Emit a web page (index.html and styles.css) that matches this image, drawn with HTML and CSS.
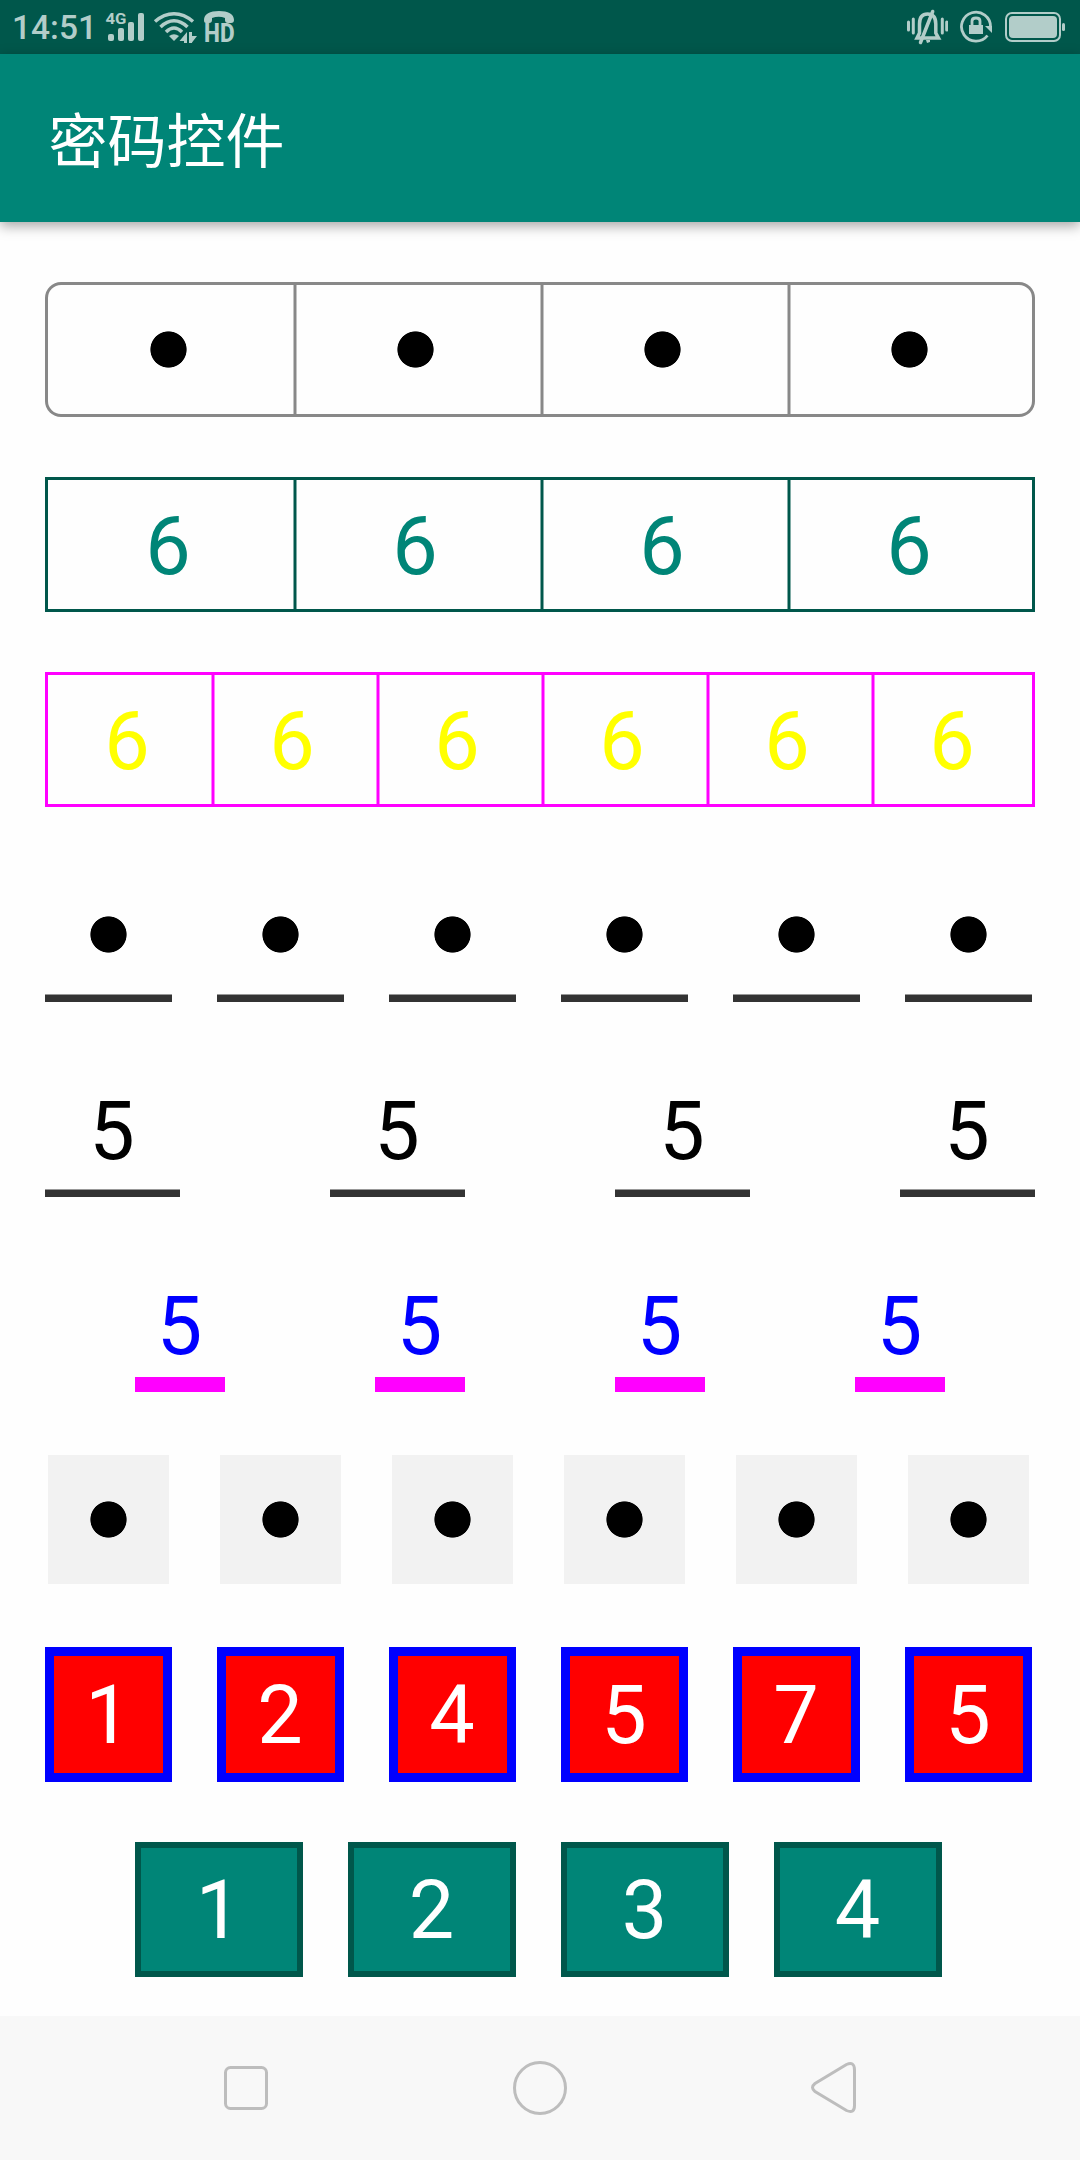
FILE: index.html
```html
<!DOCTYPE html>
<html lang="zh-CN">
<head>
<meta charset="utf-8">
<title>密码控件</title>
<link rel="stylesheet" href="styles.css">
</head>
<body>
<div class="screen">
  <div class="status-bar">
    <span class="clock">14:51</span>
    <svg class="signal" width="40" height="54" viewBox="105 0 40 54">
      <text class="network" x="105.5" y="24" textLength="21" lengthAdjust="spacingAndGlyphs">4G</text>
      <rect x="108" y="34" width="6" height="7" rx="2"/>
      <rect x="118" y="28" width="6" height="13" rx="2"/>
      <rect x="128" y="22" width="6" height="19" rx="2"/>
      <rect x="138" y="13" width="6" height="28" rx="2"/>
    </svg>
    <svg class="wifi" width="44" height="54" viewBox="153 0 44 54">
      <path class="line" d="M155 21.5Q164 13.7 174 13.7T193 21.5"/>
      <path class="line" d="M160.500 27Q167 20.800 174 20.800T187.500 27"/>
      <path class="line" d="M166 32Q170 28 174 28T182 32"/>
      <path d="M169 36Q174 32.500 179 36L174 41Z"/>
      <path d="M187 32V43H184V41H179.500Z"/>
      <path d="M189 32H192V36H197L192 42.500V43H189Z"/>
    </svg>
    <svg class="volte" width="40" height="54" viewBox="200 0 40 54">
      <path d="M204 20C204 14 210 11 219 11S234 14 234 20C234 22 233 23 231 23H228C226 23 225 22 225 20V18Q219 15.500 212 18V20C212 22 211 23 209 23H206C204.500 23 204 22 204 20Z"/>
      <text class="hd" x="204" y="42" textLength="30.500" lengthAdjust="spacingAndGlyphs">HD</text>
    </svg>
    <span class="spacer"></span>
    <svg class="bell" width="42" height="54" viewBox="906 0 42 54">
      <path class="line thin" d="M908.500 22V30M913.300 19V33M942.300 19V33M946.700 22V30"/>
      <path class="bell-shape" d="M917 38H938.500L935.800 33V24C935.800 17 932.500 14 927.500 14S919.500 17 919.500 24V33Z"/>
      <path class="line thick" d="M932.700 11.500L920.500 42.500"/>
      <path d="M926 40H930V42L927 43Z"/>
    </svg>
    <svg class="rotation" width="34" height="54" viewBox="959 0 34 54">
      <path class="line ring" d="M987.500 35.500A14.500 14.500 0 1 1 990.500 27"/>
      <path d="M985 26H992V33Z"/>
      <rect x="969" y="25" width="14" height="9"/>
      <path class="line ring" d="M972 25V21Q972 18 976 18T980 21V25"/>
    </svg>
    <svg class="battery" width="62" height="54" viewBox="1004 0 62 54">
      <rect class="shell" x="1006" y="13" width="54" height="28" rx="6"/>
      <rect x="1009" y="16" width="48" height="22" rx="4"/>
      <rect x="1062" y="23" width="3" height="8" rx="1.500"/>
    </svg>
  </div>

  <div class="app-bar"><h1 class="title">密码控件</h1></div>

  <div class="content">
    <div class="row boxed rounded">
      <div class="cell"><i class="dot"></i></div><div class="cell"><i class="dot"></i></div><div class="cell"><i class="dot"></i></div><div class="cell"><i class="dot"></i></div>
    </div>
    <div class="row digits boxed teal">
      <div class="cell">6</div><div class="cell">6</div><div class="cell">6</div><div class="cell">6</div>
    </div>
    <div class="row digits boxed six">
      <div class="cell">6</div><div class="cell">6</div><div class="cell">6</div><div class="cell">6</div><div class="cell">6</div><div class="cell">6</div>
    </div>
    <div class="row lined narrow">
      <div class="cell"><i class="dot"></i></div><div class="cell"><i class="dot"></i></div><div class="cell"><i class="dot"></i></div><div class="cell"><i class="dot"></i></div><div class="cell"><i class="dot"></i></div><div class="cell"><i class="dot"></i></div>
    </div>
    <div class="row digits lined wide">
      <div class="cell">5</div><div class="cell">5</div><div class="cell">5</div><div class="cell">5</div>
    </div>
    <div class="row digits lined magenta">
      <div class="cell">5</div><div class="cell">5</div><div class="cell">5</div><div class="cell">5</div>
    </div>
    <div class="row narrow gray">
      <div class="cell"><i class="dot"></i></div><div class="cell"><i class="dot"></i></div><div class="cell"><i class="dot"></i></div><div class="cell"><i class="dot"></i></div><div class="cell"><i class="dot"></i></div><div class="cell"><i class="dot"></i></div>
    </div>
    <div class="row digits narrow red">
      <div class="cell">1</div><div class="cell">2</div><div class="cell">4</div><div class="cell">5</div><div class="cell">7</div><div class="cell">5</div>
    </div>
    <div class="row digits solid">
      <div class="cell">1</div><div class="cell">2</div><div class="cell">3</div><div class="cell">4</div>
    </div>
  </div>

  <div class="nav-bar">
    <svg width="56" height="56" viewBox="0 0 56 56"><rect x="7.500" y="7.500" width="41" height="41" rx="5"/></svg>
    <svg width="56" height="56" viewBox="0 0 56 56"><circle cx="28" cy="28" r="25.500"/></svg>
    <svg width="56" height="56" viewBox="0 0 56 56"><path d="M40.500 4.500L9 23.500Q4 27.500 9 31.500L40.500 50.500Q48.500 54 48.500 45.500V10Q48.500 1 40.500 4.500Z"/></svg>
  </div>
</div>
</body>
</html>
```
FILE: styles.css
```css
* { box-sizing: border-box; }

body { margin: 0; }

.screen {
  display: flex;
  flex-direction: column;
  width: 1080px;
  height: 2160px;
  background: #fefefe;
  font-family: Roboto, "Noto Sans CJK SC", sans-serif;
  overflow: hidden;
}

/* Status bar */
.status-bar {
  display: flex;
  align-items: center;
  height: 54px;
  padding: 0 14px 0 12px;
  background: #00574b;
  color: #b2cdc9;
}
.status-bar svg { display: block; flex: none; fill: #b2cdc9; }
.clock {
  width: 93px;
  padding-top: 2px;
  font-size: 33.500px;
  font-weight: 500;
  line-height: 56px;
  white-space: nowrap;
}
.wifi { margin-left: 8px; }
.volte { margin-left: 3px; }
.spacer { flex: 1; }
.rotation { margin-left: 11px; }
.battery { margin-left: 11px; }
.network { font-size: 15px; font-weight: 700; }
.hd { font-size: 25px; font-weight: 800; }
.status-bar .line { fill: none; stroke: #b2cdc9; stroke-width: 3.500; }
.status-bar .thin { stroke-width: 3; stroke-linecap: round; }
.status-bar .thick { stroke-width: 3.500; stroke-linecap: round; }
.status-bar .ring { stroke-width: 2.800; }
.status-bar .bell-shape { fill: none; stroke: #b2cdc9; stroke-width: 3.500; }
.status-bar .shell { fill: none; stroke: #b2cdc9; stroke-width: 2; }

/* App bar */
.app-bar {
  display: flex;
  align-items: center;
  height: 168px;
  padding-left: 48.500px;
  background: #008577;
  box-shadow: 0 4px 12px rgba(0, 0, 0, 0.35);
}
.title {
  margin: 0;
  color: #fff;
  font-family: "Noto Sans CJK SC", sans-serif;
  font-size: 59px;
  font-weight: 400;
  line-height: 168px;
}

/* Password fields */
.content {
  display: flex;
  flex-direction: column;
  gap: 60px;
  flex: 1;
  padding: 60px 45px 0;
}
.row {
  --line: #888;
  display: flex;
  height: 135px;
  color: #000;
  font-size: 81px;
  line-height: 95px;
}
.cell {
  position: relative;
  display: flex;
  flex: none;
  align-items: center;
  justify-content: center;
  height: 135px;
}
.digits .cell { padding: 3px 1px 0 0; }
.dot {
  width: 37px;
  height: 37px;
  background: radial-gradient(circle, #000 17.700px, transparent 18.500px);
}

.boxed { box-shadow: inset 0 0 0 3px var(--line); }
.boxed .cell { width: 247px; }
.boxed .cell + .cell::before {
  content: "";
  position: absolute;
  top: 0;
  bottom: 0;
  left: 1px;
  width: 4px;
  background: linear-gradient(var(--line), var(--line)) center / 2px 100% no-repeat,
    color-mix(in srgb, var(--line) 50%, transparent);
}
.rounded { border-radius: 16px; }
.rounded .cell::before { margin: 3px 0; }
.teal { --line: #00574b; color: #008577; }
.six { --line: #f0f; color: #ff0; }
.boxed.six .cell { width: 165px; }

.narrow { gap: 45px; }
.narrow .cell { width: 127px; }

.lined .cell::after {
  content: "";
  position: absolute;
  left: 0;
  right: 0;
  bottom: 0;
  height: 8px;
  background: linear-gradient(#989898 1px, #333 1px);
}
.wide { gap: 150px; }
.wide .cell { width: 135px; }
.magenta { gap: 150px; padding-left: 90px; color: #00f; }
.magenta .cell { width: 90px; }
.lined.magenta .cell::after { height: 15px; background: #f0f; }

.gray .cell { border: 3px solid transparent; background: #f2f2f2 padding-box; }
.red { color: #fff; }
.red .cell { padding-top: 1px; border: 9px solid #00f; background: #f00; }
.solid { gap: 45px; padding-left: 90px; color: #fff; }
.solid .cell { width: 168px; padding-top: 1px; border: 6px solid #00574b; background: #008577; }

/* Navigation bar */
.nav-bar {
  display: flex;
  align-items: center;
  justify-content: center;
  gap: 238px;
  height: 144px;
  background: #f8f8f8;
}
.nav-bar svg { fill: none; stroke: #bdbdbd; stroke-width: 3; }
```
